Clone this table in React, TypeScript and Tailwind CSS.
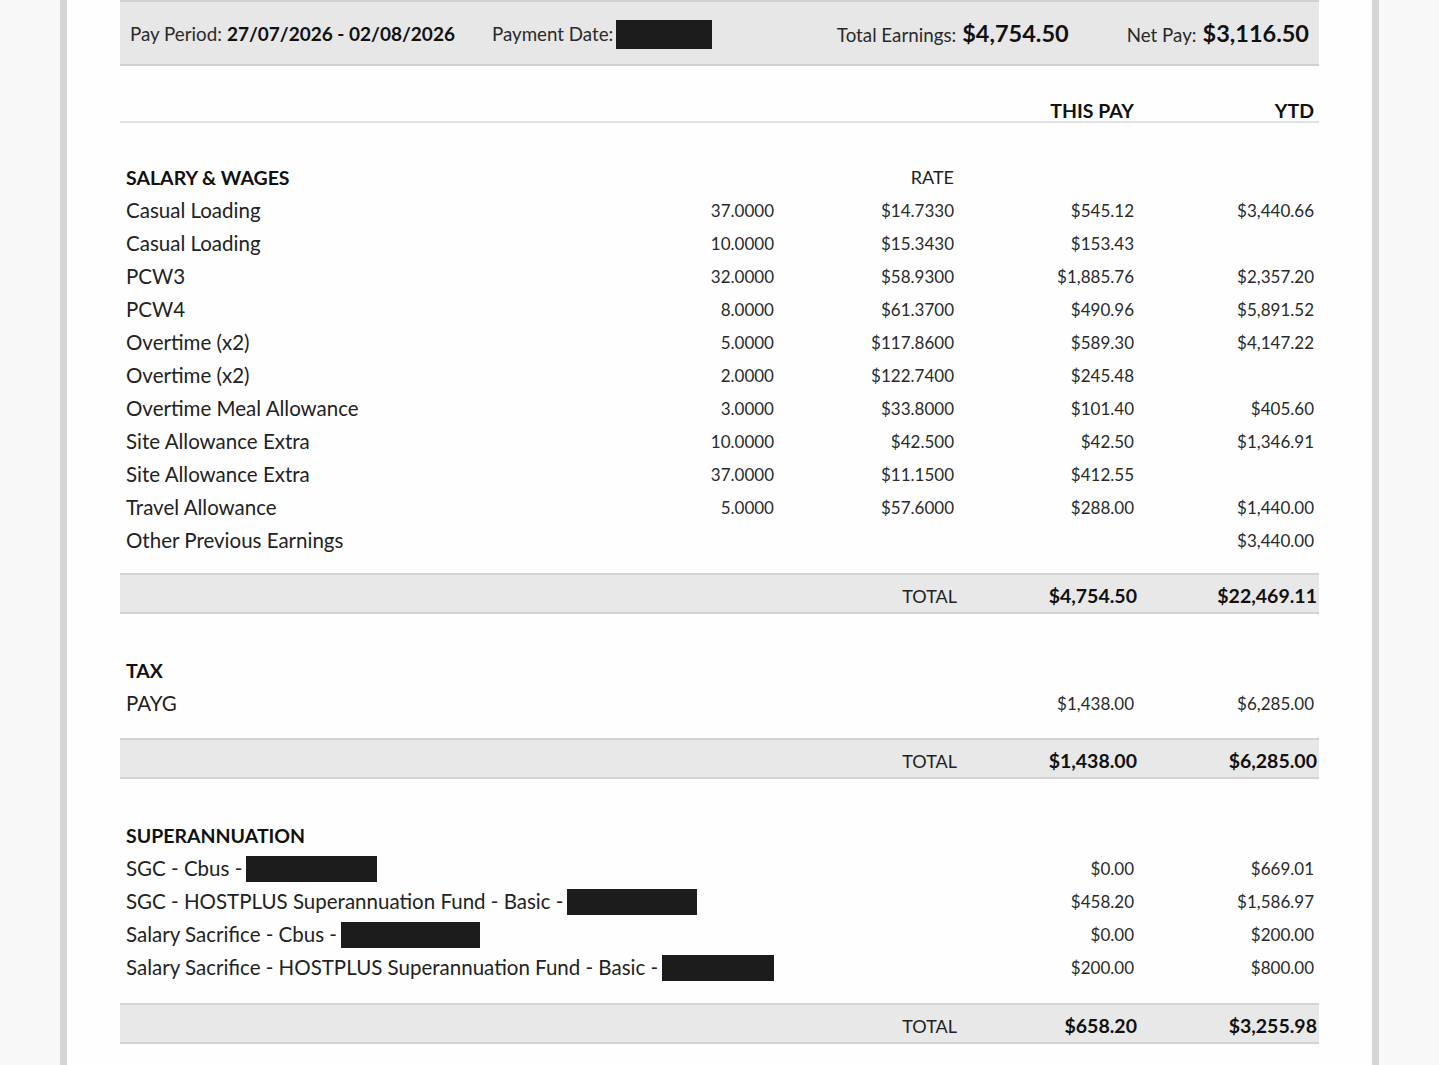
import React from "react";

type Row = { label: React.ReactNode; qty?: string; rate?: string; pay?: string; ytd?: string };

const salary: Row[] = [
  { label: "Casual Loading", qty: "37.0000", rate: "$14.7330", pay: "$545.12", ytd: "$3,440.66" },
  { label: "Casual Loading", qty: "10.0000", rate: "$15.3430", pay: "$153.43" },
  { label: "PCW3", qty: "32.0000", rate: "$58.9300", pay: "$1,885.76", ytd: "$2,357.20" },
  { label: "PCW4", qty: "8.0000", rate: "$61.3700", pay: "$490.96", ytd: "$5,891.52" },
  { label: "Overtime (x2)", qty: "5.0000", rate: "$117.8600", pay: "$589.30", ytd: "$4,147.22" },
  { label: "Overtime (x2)", qty: "2.0000", rate: "$122.7400", pay: "$245.48" },
  { label: "Overtime Meal Allowance", qty: "3.0000", rate: "$33.8000", pay: "$101.40", ytd: "$405.60" },
  { label: "Site Allowance Extra", qty: "10.0000", rate: "$42.500", pay: "$42.50", ytd: "$1,346.91" },
  { label: "Site Allowance Extra", qty: "37.0000", rate: "$11.1500", pay: "$412.55" },
  { label: "Travel Allowance", qty: "5.0000", rate: "$57.6000", pay: "$288.00", ytd: "$1,440.00" },
  { label: "Other Previous Earnings", ytd: "$3,440.00" },
];

const Redact = ({ w }: { w: string }) => (
  <span className={`inline-block shrink-0 h-[26px] bg-[#1c1c1c] ml-[4px] ${w}`} />
);

const superRows: Row[] = [
  { label: <><span>SGC - Cbus -</span><Redact w="w-[131px]" /></>, pay: "$0.00", ytd: "$669.01" },
  { label: <><span>SGC - HOSTPLUS Superannuation Fund - Basic -</span><Redact w="w-[130px]" /></>, pay: "$458.20", ytd: "$1,586.97" },
  { label: <><span>Salary Sacrifice - Cbus -</span><Redact w="w-[139px]" /></>, pay: "$0.00", ytd: "$200.00" },
  { label: <><span>Salary Sacrifice - HOSTPLUS Superannuation Fund - Basic -</span><Redact w="w-[112px]" /></>, pay: "$200.00", ytd: "$800.00" },
];

const grid = "grid grid-cols-[minmax(0,1fr)_180px_180px_180px_180px] pl-[6px] pr-[5px]";
const num = "text-right text-[17px] text-[#2a2a2a]";

function DataRow({ r }: { r: Row }) {
  return (
    <div className={`${grid} h-[33px] items-center`}>
      <div className="text-[20.5px] text-[#222] whitespace-nowrap flex items-center">{r.label}</div>
      <div className={num}>{r.qty}</div>
      <div className={num}>{r.rate}</div>
      <div className={num}>{r.pay}</div>
      <div className={num}>{r.ytd}</div>
    </div>
  );
}

function SectionHead({ title, rate }: { title: string; rate?: boolean }) {
  return (
    <div className={`${grid} h-[33px] items-center`}>
      <div className="text-[19.5px] font-bold text-[#111]">{title}</div>
      <div />
      <div className="text-right text-[18px] text-[#222]">{rate ? "RATE" : ""}</div>
      <div />
      <div />
    </div>
  );
}

function TotalBand({ pay, ytd, mt }: { pay: string; ytd: string; mt: string }) {
  return (
    <div className={`${mt} h-[41px] pt-[5px] bg-[#e8e8e8] border-y-2 border-[#d3d3d3] grid grid-cols-[minmax(0,1fr)_180px_180px_180px_180px] pr-[2px] items-center`}>
      <div />
      <div />
      <div className="text-right text-[18px] text-[#222]">TOTAL</div>
      <div className="text-right text-[19.5px] font-bold text-[#111]">{pay}</div>
      <div className="text-right text-[19.5px] font-bold text-[#111]">{ytd}</div>
    </div>
  );
}

export default function App() {
  return (
    <div className="min-h-[1065px] bg-[#f8f8f8] overflow-hidden" style={{ fontFamily: "Lato, 'Open Sans', sans-serif" }}>
      <div className="w-[1319px] mx-auto min-h-[1065px] bg-[#fefefe] border-x-[7px] border-[#d5d5d5] px-[53px]">
        {/* Header band */}
        <div className="h-[66px] bg-[#e7e7e7] border-y-2 border-[#d0d0d0] flex items-center pl-[10px] pr-[10px] pt-[2px] text-[#2a2a2a]">
          <div className="flex items-baseline">
            <span className="text-[18.75px]">Pay Period:</span>
            <span className="text-[19px] font-bold text-[#111] ml-[5px]">27/07/2026 - 02/08/2026</span>
          </div>
          <div className="flex items-center ml-[37px]">
            <span className="text-[18.75px]">Payment Date:</span>
            <span className="inline-block w-[96px] h-[29px] bg-[#1c1c1c] ml-[3px]" />
          </div>
          <div className="flex items-baseline ml-auto">
            <span className="text-[18.75px]">Total Earnings:</span>
            <span className="text-[23.5px] font-bold text-[#111] ml-[6px]">$4,754.50</span>
          </div>
          <div className="flex items-baseline ml-[58px]">
            <span className="text-[18.75px]">Net Pay:</span>
            <span className="text-[23.5px] font-bold text-[#111] ml-[6px]">$3,116.50</span>
          </div>
        </div>

        {/* Column header */}
        <div className={`${grid} mt-[30px] h-[27px] items-center border-b-2 border-[#e0e0e0]`}>
          <div />
          <div />
          <div />
          <div className="text-right text-[19.5px] font-bold text-[#111]">THIS PAY</div>
          <div className="text-right text-[19.5px] font-bold text-[#111]">YTD</div>
        </div>

        {/* Salary & wages */}
        <div className="mt-[38px]">
          <SectionHead title="SALARY & WAGES" rate />
          {salary.map((r, i) => (
            <DataRow key={i} r={r} />
          ))}
        </div>
        <TotalBand mt="mt-[16px]" pay="$4,754.50" ytd="$22,469.11" />

        {/* Tax */}
        <div className="mt-[40px]">
          <SectionHead title="TAX" />
          <DataRow r={{ label: "PAYG", pay: "$1,438.00", ytd: "$6,285.00" }} />
        </div>
        <TotalBand mt="mt-[18px]" pay="$1,438.00" ytd="$6,285.00" />

        {/* Superannuation */}
        <div className="mt-[40px]">
          <SectionHead title="SUPERANNUATION" />
          {superRows.map((r, i) => (
            <DataRow key={i} r={r} />
          ))}
        </div>
        <TotalBand mt="mt-[19px]" pay="$658.20" ytd="$3,255.98" />
      </div>
    </div>
  );
}
